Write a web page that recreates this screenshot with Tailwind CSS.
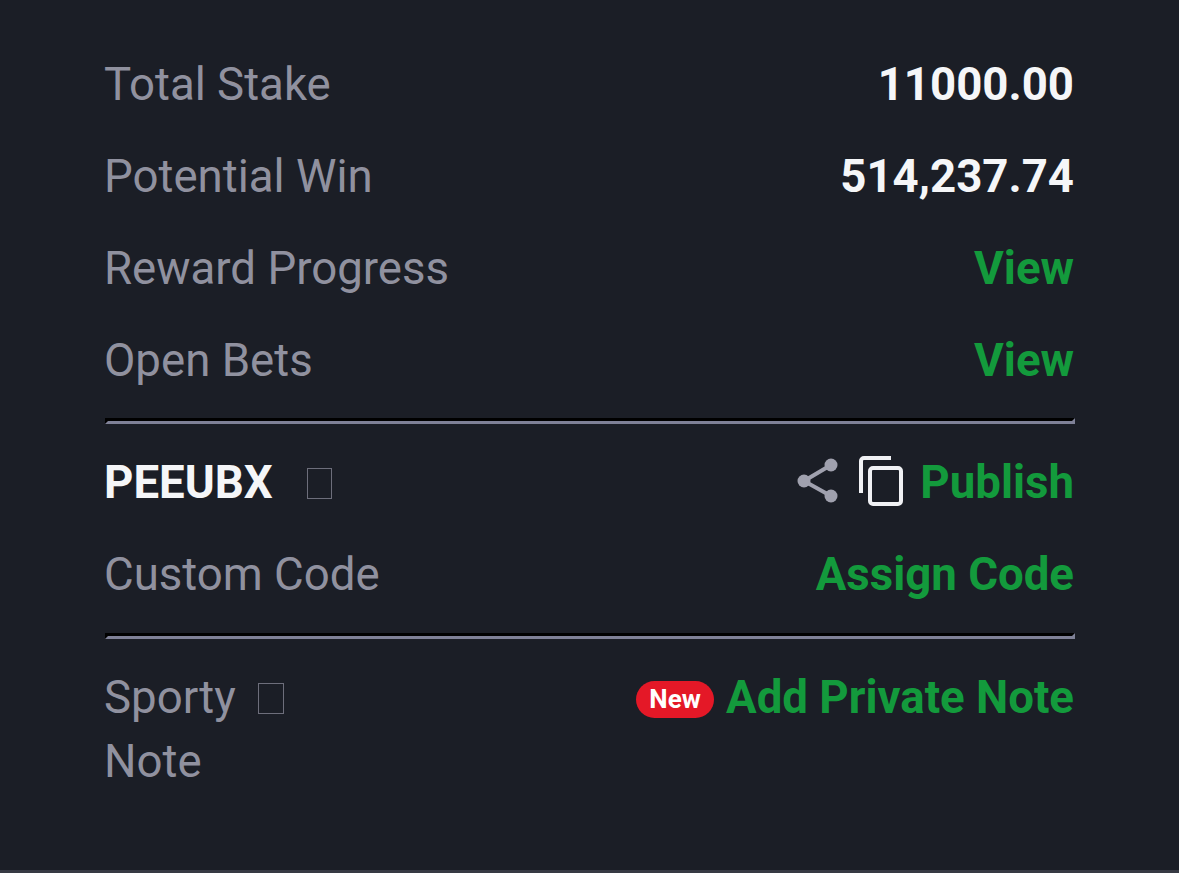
<!DOCTYPE html>
<html lang="en">
  <head>
    <meta charset="UTF-8" />
    <title>Bet details</title>
    <script src="https://cdn.jsdelivr.net/npm/@tailwindcss/browser@4"></script>
  </head>
  <body class="bg-[#1b1e26] font-['Roboto',sans-serif] text-[45.6px] leading-[64px] text-[#90919f]">
    <div class="h-[873px] flex flex-col justify-between overflow-hidden">
      <main class="pl-[104px] pr-[105px] pt-[39px]">
        <!-- Summary rows -->
        <div class="flex justify-between items-center h-[92px]">
          <span>Total Stake</span>
          <span class="font-bold text-[#f5f6f8]">11000.00</span>
        </div>
        <div class="flex justify-between items-center h-[92px]">
          <span>Potential Win</span>
          <span class="font-bold text-[#f5f6f8]">514,237.74</span>
        </div>
        <div class="flex justify-between items-center h-[92px]">
          <span>Reward Progress</span>
          <span class="font-bold text-[#139a3c]">View</span>
        </div>
        <div class="flex justify-between items-center h-[92px]">
          <span>Open Bets</span>
          <span class="font-bold text-[#139a3c]">View</span>
        </div>

        <div class="mt-[11px] ml-[1px] mr-[-1px] h-[6px] border-[3px] border-t-black border-l-black border-b-[#7f8197] border-r-[#7f8197]"></div>

        <!-- Booking code -->
        <div class="mt-[13px] flex justify-between items-center h-[92px]">
          <div class="flex items-center">
            <span class="font-bold text-[#f5f6f8]">PEEUBX</span>
            <span class="ml-[34px] w-[25px] h-[31px] border border-[#6d6e7b]"></span>
          </div>
          <div class="flex items-center">
            <svg class="w-[44px] h-[50px] text-[#a0a1ae]" viewBox="0 0 44 50" fill="currentColor">
              <path d="M35 7 8 23l27 15" fill="none" stroke="currentColor" stroke-width="4" />
              <circle cx="35" cy="7" r="6.5" />
              <circle cx="8" cy="23" r="6.5" />
              <circle cx="35" cy="38" r="6.5" />
            </svg>
            <svg class="ml-[17px] mb-[2px] w-[47px] h-[52px] text-[#f0f1f4]" viewBox="0 0 47 52" fill="none" stroke="currentColor" stroke-width="4">
              <path d="M34 2H7a3 3 0 0 0-3 3v32" />
              <rect x="13" y="12" width="31" height="36" rx="3" />
            </svg>
            <span class="ml-[16px] font-bold text-[#139a3c]">Publish</span>
          </div>
        </div>
        <div class="flex justify-between items-center h-[92px]">
          <span>Custom Code</span>
          <span class="font-bold text-[#139a3c]">Assign Code</span>
        </div>

        <div class="mt-[12px] ml-[1px] mr-[-1px] h-[6px] border-[3px] border-t-black border-l-black border-b-[#7f8197] border-r-[#7f8197]"></div>

        <!-- Note -->
        <div class="mt-[27px] flex justify-between items-start">
          <div class="w-[190px]">
            <span class="inline-flex items-center">Sporty<span class="ml-[22px] w-[26px] h-[31px] border border-[#6d6e7b]"></span></span>
            <div>Note</div>
          </div>
          <div class="flex items-center h-[64px]">
            <span class="mt-[2px] w-[78px] h-[37px] rounded-full bg-[#e41827] flex items-center justify-center text-[26px] leading-none font-bold text-white">New</span>
            <span class="ml-[12px] font-bold text-[#139a3c]">Add Private Note</span>
          </div>
        </div>
      </main>
      <div class="h-[3px] bg-[#373a44]"></div>
    </div>
  </body>
</html>
